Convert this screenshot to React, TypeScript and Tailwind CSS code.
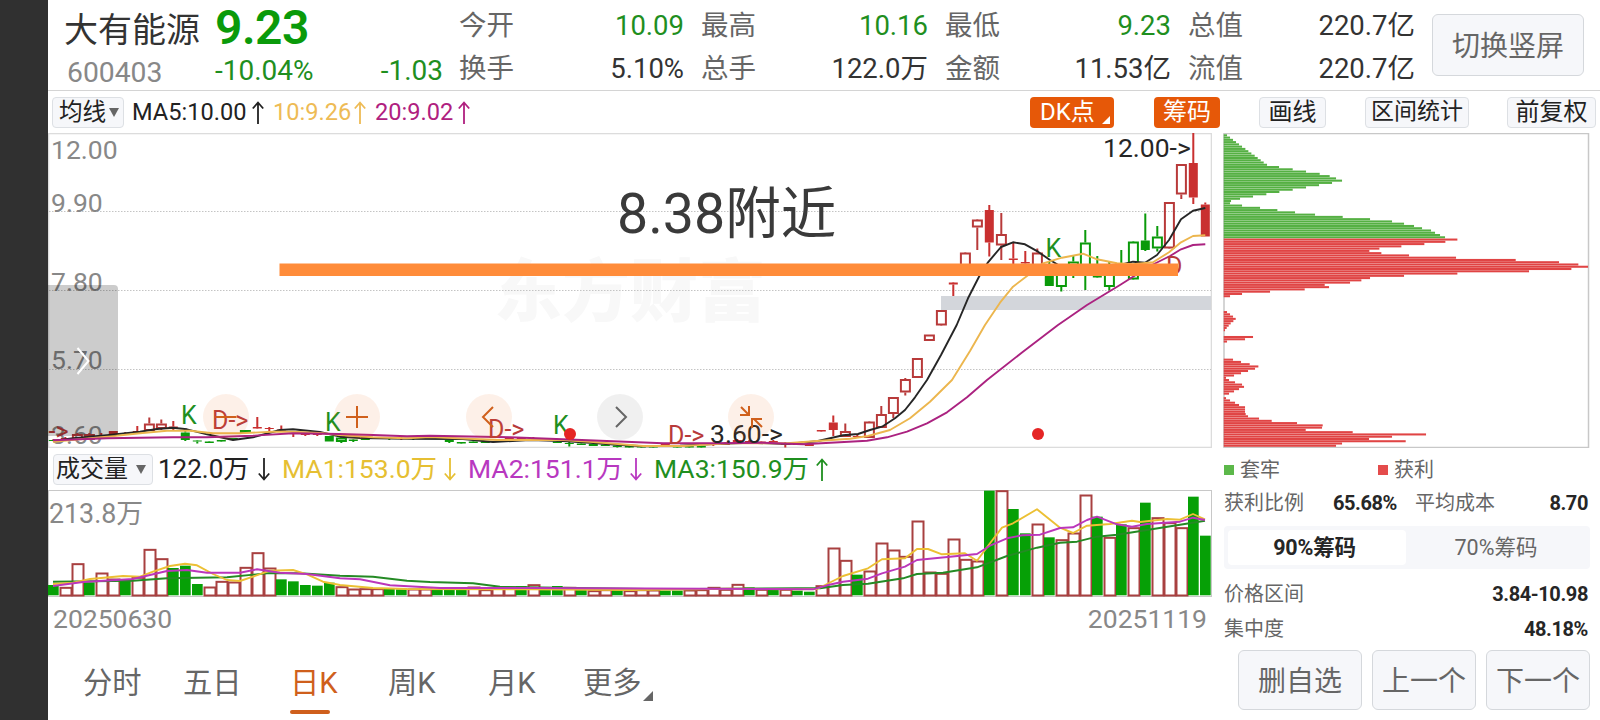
import type { ReactNode } from 'react';

type Point = [number, number];

// [open/close top, bottom, wick top, wick bottom, style]
// style: r = red hollow, R = red solid, g = green hollow, G = green solid
type Candle = [number, number, number, number, string];

const LEFT = 47.7;
const STEP = 12;

const quotes = [
  { label: '今开', value: '10.09', green: true },
  { label: '最高', value: '10.16', green: true },
  { label: '最低', value: '9.23', green: true },
  { label: '总值', value: '220.7亿', green: false },
  { label: '换手', value: '5.10%', green: false },
  { label: '总手', value: '122.0万', green: false },
  { label: '金额', value: '11.53亿', green: false },
  { label: '流值', value: '220.7亿', green: false },
];

const candles: Candle[] = [
  [440, 441, 440, 441, 'G'], [438, 439, 437, 440, 'R'], [434, 440, 433, 440, 'r'], [434, 440, 433, 440, 'r'],
  [436, 437, 433, 438, 'R'], [431, 436, 431, 436, 'R'], [433, 434, 432, 435, 'R'], [431, 433, 426, 434, 'R'],
  [423.5, 431, 417.5, 431, 'r'], [423.5, 429, 419.5, 430, 'r'], [426.5, 428, 421, 430, 'R'], [432.5, 440, 431, 441, 'G'],
  [440.5, 441.5, 440, 443.5, 'G'], [441.5, 443, 441, 443, 'G'], [440, 441.5, 440, 441, 'G'], [438, 439.5, 438, 439, 'G'],
  [430, 432.5, 430, 433, 'g'], [427, 428.5, 417, 429, 'R'], [428, 429, 427, 431, 'R'], [429.5, 430.5, 425.5, 431, 'R'],
  [433, 434, 434, 437, 'R'], [434, 435, 434, 436, 'R'], [434, 435, 434, 436, 'R'], [436, 441.5, 436, 441.5, 'G'],
  [437.5, 442, 437, 443, 'g'], [439.5, 441, 439, 442, 'G'], [436, 440, 436, 440, 'G'], [437, 439, 437, 439, 'G'],
  [438, 439, 438, 440, 'G'], [438, 439, 437, 440, 'R'], [438, 439, 437, 440, 'G'], [438, 439, 438, 439, 'R'],
  [438, 439, 438, 439, 'G'], [440, 442, 440, 443, 'G'], [442, 443.5, 442, 443, 'G'], [441.5, 443, 441, 443, 'G'],
  [441.5, 443, 441, 443, 'G'], [441, 442, 441, 442, 'G'], [438, 440, 438, 440, 'R'], [438, 440, 438, 440, 'R'],
  [438, 439, 437, 440, 'R'], [438, 439, 438, 440, 'R'], [441.5, 443, 441, 443, 'G'], [443, 444, 442, 446.5, 'G'],
  [443.5, 445, 443, 445, 'G'], [444, 446, 444, 446, 'G'], [444.5, 446, 444, 446, 'G'], [445.5, 447, 443, 447.5, 'G'],
  [446, 447.5, 446, 447, 'G'], [446, 447.5, 446, 447, 'G'], [446, 447.5, 446, 447, 'G'], [444, 446, 444, 446, 'R'],
  [446, 447.5, 446, 447, 'G'], [446, 447.5, 446, 447, 'G'], [446, 447.5, 446, 447, 'G'], [444, 445, 443, 446, 'R'],
  [443, 445, 442, 445, 'R'], [440, 443, 439, 444, 'R'], [441, 443, 440, 443, 'R'], [441.5, 443.5, 441, 444, 'R'],
  [441, 443, 440, 443, 'R'], [443.5, 445, 442, 447.5, 'R'], [444, 445, 443, 445, 'R'], [444, 446, 444, 446, 'R'],
  [430, 431.5, 430, 431, 'R'], [422.5, 430, 415.5, 436, 'R'], [431, 437, 423.5, 437, 'r'], [436, 437, 435, 438, 'R'],
  [421.5, 438, 421, 438, 'r'], [414, 428, 406, 428, 'r'], [397, 414, 397, 418, 'r'], [379, 392.5, 378, 395.5, 'r'],
  [358, 378, 358, 378, 'r'], [334.5, 341, 334.5, 341, 'r'], [310, 325.500, 310, 325, 'r'], [282.5, 284.5, 283, 296, 'R'],
  [252.5, 268, 253, 268, 'r'], [219.5, 227.5, 220, 250, 'r'], [210, 242.5, 205, 256.5, 'R'], [234, 245.5, 213, 260, 'r'],
  [258.5, 260, 242.5, 264, 'R'], [262, 263.5, 251, 264, 'R'], [252.5, 268, 248.5, 268, 'r'], [266, 286, 262, 286, 'G'],
  [268, 287, 264, 291.5, 'g'], [261.5, 266, 256, 278, 'g'], [242.5, 272, 230, 290, 'g'], [276, 277.5, 256, 277, 'G'],
  [270, 287, 262, 290.5, 'g'], [266, 270, 250, 272, 'G'], [241.5, 279.5, 242, 279, 'g'], [240.5, 250, 213.5, 251, 'G'],
  [236.5, 248.5, 226, 251.5, 'g'], [202, 248.5, 203, 248, 'r'], [164, 194.5, 165, 199, 'r'], [163, 197.5, 133, 204, 'R'],
  [204.5, 236.5, 202.5, 236.5, 'R'],
];

// top edge of every volume bar, in thirds of a pixel below y=380
const volumes =
  'G615 r622 r551 G607 r579 r597 G602 r592 r508 r536 G564 G557 G612 r621 r604 r606 r562 r518 r564 G598 G604 G615 G617 G608 ' +
  'r620 r627 r626 r626 G627 G628 r627 r627 G627 G628 G628 r621 r629 r625 r621 G618 r614 G625 G618 r622 G628 r632 r629 G628 ' +
  'r632 r629 r630 G632 G632 r630 r629 r622 r628 r613 G622 r628 G624 r628 G632 G635 r617 r504 r541 G584 r573 r489 r510 r529 ' +
  'r423 r576 r580 r477 r538 r543 G332 r332 G387 G460 r432 G472 r479 r459 r345 G410 r472 G433 r443 G368 r413 r428 r443 G350 G467';

const ma5: Point[] = [
  [53, 441], [73, 438.3], [107, 435.3], [140, 431.7], [157, 429], [173, 427.7], [187, 429.3], [207, 434.3],
  [233, 440], [253, 437.3], [280, 430], [293, 429.3], [320, 432], [340, 436.7], [360, 438], [407, 438.7],
  [463, 439], [493, 442], [530, 440], [563, 441], [590, 442.7], [617, 444.7], [643, 446.3], [680, 445.7],
  [713, 444], [750, 442.7], [787, 444], [817, 441.3], [843, 435.3], [858, 434], [870, 430], [882, 426.7],
  [895, 418.3], [905, 410], [915, 397.3], [927, 380], [941, 355], [956.7, 325], [968, 298.3], [979, 276.7],
  [988, 262.3], [1001, 247], [1013, 242.3], [1025, 244.3], [1038, 251.7], [1050, 260], [1060, 266], [1085, 272],
  [1110, 268], [1120, 265], [1133, 261.7], [1145, 262.7], [1157, 255], [1169, 240], [1181, 219.3], [1193, 210.7],
  [1205.3, 208],
];

const ma10: Point[] = [
  [53, 441.7], [107, 436.7], [140, 433.3], [167, 430.7], [190, 430.7], [213, 433.3], [240, 433.3], [273, 431.7],
  [293, 431.7], [323, 433.3], [340, 435], [373, 437.3], [407, 438.3], [430, 437], [497, 440], [563, 440],
  [590, 441.7], [643, 446], [683, 446], [730, 443.3], [787, 443.3], [817, 441], [850, 438.7], [868, 436],
  [890, 430], [910, 418.3], [930, 401.7], [952, 380], [970, 351], [985, 325], [1000, 302.7], [1013, 286.7],
  [1027, 276], [1043, 263.3], [1062, 257.7], [1083, 253.7], [1097, 259.3], [1117, 263.3], [1133, 264.3],
  [1153, 262.3], [1169, 252.3], [1181, 242.3], [1193, 236], [1205.3, 235.3],
];

const ma20: Point[] = [
  [53, 440.3], [107, 438.3], [173, 437.3], [207, 437.3], [253, 435.7], [293, 433.3], [340, 434], [373, 435],
  [407, 436.3], [430, 435.7], [510, 437.3], [563, 439.3], [663, 443.3], [713, 443.3], [763, 442.7], [803, 444.3],
  [867, 440.7], [887, 437.3], [907, 431.7], [927, 423.3], [947, 412.3], [967, 397.3], [987, 380], [1022, 352.5],
  [1058, 325], [1070, 316.7], [1087, 305], [1120, 285], [1150, 266], [1170, 256], [1181, 249.3], [1193, 245],
  [1205.3, 244.3],
];

const vol5: Point[] = [
  [53, 584], [73, 582.7], [90, 579], [123, 576], [140, 576.7], [153, 571.7], [170, 566], [185, 563.7],
  [197, 565.3], [213, 574], [227, 580], [240, 581], [253, 576.7], [270, 570.7], [293, 570], [307, 574.3],
  [323, 581.7], [340, 585], [373, 588], [407, 589], [530, 589.3], [630, 590], [730, 588.7], [797, 589.3],
  [817, 589], [827, 584], [843, 576], [868, 568.3], [882, 559.3], [905, 558.3], [917, 549], [928, 549],
  [942, 554.3], [965, 553.3], [977, 560.7], [990, 543.3], [1002, 527.7], [1013, 523.3], [1037, 509.3],
  [1060, 527.7], [1073, 533], [1087, 525.7], [1110, 524], [1132, 520.7], [1140, 522], [1167, 519], [1180, 519.7],
  [1193, 514], [1205, 519.3],
];

const vol10: Point[] = [
  [53, 586], [83, 582], [133, 579], [167, 571], [187, 570], [207, 572.7], [240, 572.7], [257, 569.3],
  [280, 572.7], [307, 574], [340, 578.3], [360, 579.3], [390, 585.3], [440, 588], [530, 588], [813, 589.3],
  [827, 585.3], [843, 581.7], [868, 578.7], [882, 573.3], [905, 566.7], [917, 560], [950, 556.7], [977, 554],
  [990, 545.7], [1007, 538.3], [1022, 535.3], [1040, 534.7], [1060, 528], [1073, 527.3], [1087, 520],
  [1097, 516.7], [1117, 524.3], [1132, 526.7], [1147, 524], [1180, 521.7], [1193, 517.7], [1205, 520],
];

const vol20: Point[] = [
  [53, 581.7], [133, 580.7], [167, 578.3], [227, 577.3], [267, 573.3], [300, 573.3], [340, 575.7], [373, 576.7],
  [407, 580.7], [430, 582], [473, 583.3], [500, 586.7], [663, 589.3], [730, 588.7], [797, 588.3], [820, 588.3],
  [843, 585], [868, 583.7], [903, 578.3], [917, 574], [943, 572.7], [977, 567.3], [1007, 556], [1037, 547.7],
  [1060, 542.7], [1077, 541.7], [1097, 536.7], [1117, 534.7], [1147, 530], [1180, 524.7], [1205, 520.7],
];

// right end of each chip row, in thirds of a pixel; 0 is an empty row
const chips = [
  51, 60, 69, 78, 87, 96, 106, 115, 124, 134, 143, 152, 161, 171, 207, 248, 288, 329, 359, 378, 396, 366, 327, 288,
  248, 208, 169, 129, 90, 63, 60, 96, 150, 202, 255, 315, 398, 480, 546, 582, 612, 636, 663, 675, 690, 705, 742, 706,
  643, 574, 508, 478, 514, 597, 738, 917, 1047, 1105, 1134, 1084, 957, 742, 582, 480, 454, 420, 344, 357, 284, 180,
  96, 60, 0, 0, 0, 0, 0, 0, 51, 60, 69, 77, 70, 62, 56, 50, 45, 0, 0, 129, 105, 51, 0, 0, 0, 0, 0, 0, 0, 69, 93, 119,
  145, 135, 114, 93, 72, 48, 57, 75, 96, 102, 87, 72, 57, 0, 48, 60, 75, 87, 105, 105, 105, 107, 114, 147, 185, 261,
  338, 336, 287, 428, 648, 546, 477, 587, 396, 378,
];

const toPath = (points: Point[]) => {
  let d = `M${points[0][0]} ${points[0][1]}`;
  for (let i = 1; i < points.length; i++) {
    const [x, y] = points[i];
    d += ` L${x} ${y}`;
  }
  return d;
};

const Line = ({ points, color }: { points: Point[]; color: string }) => (
  <path d={toPath(points)} fill="none" stroke={color} strokeWidth="1.9" strokeLinejoin="round" />
);

const Arrow = ({ down = false }: { down?: boolean }) => (
  <svg
    viewBox="0 0 12 23"
    className={down ? 'h-[23px] w-3 rotate-180' : 'h-[23px] w-3'}
    fill="none"
    stroke="currentColor"
    strokeWidth="1.8"
  >
    <path d="M6 23V1.5M.8 7.5 6 1.5l5.2 6" />
  </svg>
);

const Caret = () => (
  <svg viewBox="0 0 10 9" className="h-[9px] w-[10px]" fill="#666">
    <path d="M0 0h10L5 9z" />
  </svg>
);

const Corner = ({ className }: { className: string }) => (
  <svg viewBox="0 0 10 10" className={className} fill="currentColor">
    <path d="M10 0v10H0z" />
  </svg>
);

const RoundButton = ({ children, className }: { children: ReactNode; className: string }) => (
  <button className={`absolute top-[261px] flex size-[46px] items-center justify-center rounded-full ${className}`}>
    <svg viewBox="0 0 46 46" className="size-[46px]" fill="none" stroke="currentColor" strokeWidth="2">
      {children}
    </svg>
  </button>
);

const Header = () => (
  <header className="flex h-[91px] border-b border-[#d4d4d4]">
    <div className="w-[406px] pl-4">
      <div className="flex h-[52px]">
        <span className="w-[151px] text-[34px] leading-[60px] text-[#333]">大有能源</span>
        <span className="text-[48px] leading-[55px] font-semibold tracking-[-0.5px] text-[#0a9a0a]">9.23</span>
      </div>
      <div className="flex pl-[3px] text-[28px] leading-[38px] text-[#1f8f1f]">
        <span className="w-[148px] pt-[2px] text-[28.3px] text-[#888]">600403</span>
        <span>-10.04%</span>
        <span className="ml-auto pr-[11px]">-1.03</span>
      </div>
    </div>
    <div className="grid grid-cols-[225px_227px_226px_227px] gap-x-[17px] pt-[5px] pl-[5px] text-[27.5px] leading-[42px]">
      {quotes.map((q, i) => (
        <div key={i} className="flex h-[42px] justify-between whitespace-nowrap">
          <span className="text-[#666]">{q.label}</span>
          <span className={q.green ? 'text-[#1f8f1f]' : 'text-[#333]'}>{q.value}</span>
        </div>
      ))}
    </div>
    <button className="mt-[14px] ml-[17px] h-[62px] w-[152px] rounded-md border border-[#d5d8dc] bg-[#f6f7fa] pt-[3px] text-[28px] text-[#666]">
      切换竖屏
    </button>
  </header>
);

const Toolbar = () => (
  <div className="flex h-[42px] items-center pt-0 pl-1 text-[23.6px] leading-[28px] whitespace-nowrap text-[#222]">
    <button className="flex h-[31px] w-[72px] items-center gap-[3px] rounded border border-[#dde0e4] bg-[#f6f7fa] pl-[6px]">
      均线
      <Caret />
    </button>
    <span className="ml-2 w-[120px]">MA5:10.00</span>
    <Arrow />
    <span className="ml-[9px] flex w-[102px] items-center text-[#eebb55]">
      <span className="w-[81px]">10:9.26</span>
      <Arrow />
    </span>
    <span className="flex items-center text-[#b0207f]">
      <span className="w-[83px]">20:9.02</span>
      <Arrow />
    </span>
    <div className="ml-auto flex pr-[4px] text-[24px]">
      <button className="relative h-[31px] w-[84px] rounded bg-[#e65808] pl-[10px] text-left text-white">
        DK点
        <Corner className="absolute right-[4px] bottom-[4px] size-[8px]" />
      </button>
      <button className="ml-[40px] h-[31px] w-[66px] rounded bg-[#e65808] text-white">筹码</button>
      <button className="ml-[39px] h-[31px] w-[67px] rounded border border-[#dde0e4] bg-[#f6f7fa]">画线</button>
      <button className="ml-[39px] h-[31px] w-[104px] rounded border border-[#dde0e4] bg-[#f6f7fa] text-[23px]">
        区间统计
      </button>
      <button className="ml-[38px] h-[31px] w-[89px] rounded border border-[#dde0e4] bg-[#f6f7fa]">前复权</button>
    </div>
  </div>
);

const PriceChart = () => (
  <div className="relative h-[315px] w-[1164px]">
    <svg viewBox="48 133 1164 315" className="h-[315px] w-[1164px]">
      <rect x="48.5" y="133.5" width="1163" height="314" fill="none" stroke="#dcdcdc" strokeWidth="1.6" />
      <text x="494" y="316" fontSize="68" fontWeight="900" fill="#f8f8f8">
        东方财富
      </text>
      {[211.5, 290.5, 369.5].map((y) => (
        <path key={y} d={`M49 ${y}H1211`} stroke="#c4c4c4" strokeDasharray="1.5 1.5" />
      ))}
      <rect x="941" y="296" width="270" height="14" fill="#d3d6db" />
      <g fontSize="26.5" fill="#888">
        <text x="51" y="159">12.00</text>
        <text x="51" y="212">9.90</text>
        <text x="51" y="291">7.80</text>
        <text x="51" y="369">5.70</text>
        <text x="51" y="444">3.60</text>
      </g>
      {candles.map(([top, bottom, high, low, style], i) => {
        const x = LEFT + 5.6 + STEP * i;
        const hollow = style === 'r' || style === 'g';
        const color = style === 'g' || style === 'G' ? '#0a9a0a' : hollow ? '#b83a3a' : '#c93030';
        return (
          <g key={i} stroke={color} strokeWidth="2">
            <path d={`M${x} ${high}V${top}M${x} ${bottom}V${low}`} />
            {hollow ? (
              <rect x={x - 4.4} y={top + 1} width="9" height={Math.max(bottom - top - 2, 1)} fill="none" />
            ) : (
              <rect x={x - 4.5} y={top} width="9" height={bottom - top} fill={color} stroke="none" />
            )}
          </g>
        );
      })}
      <Line points={ma5} color="#262626" />
      <Line points={ma10} color="#ecb64e" />
      <Line points={ma20} color="#ab2280" />
      <g fontSize="25" fill="#1f8f1f">
        <text x="181" y="424">K</text>
        <text x="325" y="431">K</text>
        <text x="553" y="434">K</text>
        <text x="1045.500" y="257">K</text>
      </g>
      <g fontSize="25" fill="#b83a3a">
        <text x="48.500" y="440">-&gt;</text>
        <text x="212" y="429">D-&gt;</text>
        <text x="488" y="438">D-&gt;</text>
        <text x="668" y="444">D-&gt;</text>
        <text x="1166" y="275">D</text>
      </g>
      <g fontSize="26.5" fill="#262626">
        <text x="710" y="443">3.60-&gt;</text>
        <text x="1103" y="157">12.00-&gt;</text>
      </g>
      <circle cx="570" cy="434" r="6" fill="#e52525" />
      <circle cx="1038" cy="434" r="6" fill="#e52525" />
      <rect x="279.5" y="263.5" width="898.5" height="12.5" fill="#ff8c3a" />
      <text x="617" y="233" fontSize="55.5" fill="#3a3a3a">
        8.38附近
      </text>
    </svg>
    <div className="absolute top-[152px] left-0 flex h-[151px] w-[70px] items-center rounded-r bg-black/20 pl-[28px]">
      <svg viewBox="0 0 14 28" className="h-7 w-3.5" fill="none" stroke="#fff" strokeWidth="2">
        <path d="M1.5 1 12.5 14 1.5 27" />
      </svg>
    </div>
    <RoundButton className="left-[155px] bg-[#f06a20]/10 text-[#d0601c]">
      <path d="M12.5 23h21" />
    </RoundButton>
    <RoundButton className="left-[286px] bg-[#f06a20]/10 text-[#d0601c]">
      <path d="M12 23h22M23 12v22" />
    </RoundButton>
    <RoundButton className="left-[418px] bg-[#f06a20]/10 text-[#d0601c]">
      <path d="M27 13 17 23l10 10" />
    </RoundButton>
    <RoundButton className="left-[549px] bg-black/6 text-[#666]">
      <path d="M19 13l10 10-10 10" />
    </RoundButton>
    <RoundButton className="left-[680px] bg-[#f06a20]/10 text-[#d0601c]">
      <path d="M13 13l8 8M12 21h9v-9M34 33l-8-8M24 34v-9h10" />
    </RoundButton>
  </div>
);

const VolumeLegend = () => (
  <div className="flex h-[42px] items-center pl-[5px] text-[26.5px] leading-[30px] whitespace-nowrap text-[#222]">
    <button className="flex h-[31px] w-[100px] items-center justify-between rounded border border-[#dde0e4] bg-[#f6f7fa] pr-[6px] pl-[2px] text-[24px] leading-[28px]">
      成交量
      <Caret />
    </button>
    <span className="ml-[5px] w-[100px] text-[26px]">122.0万</span>
    <Arrow down />
    <span className="ml-[12px] flex w-[186px] items-center text-[#e6bf33]">
      <span className="w-[162px]">MA1:153.0万</span>
      <Arrow down />
    </span>
    <span className="flex w-[186px] items-center text-[#b838c0]">
      <span className="w-[162px]">MA2:151.1万</span>
      <Arrow down />
    </span>
    <span className="flex items-center text-[#1f8f1f]">
      <span className="w-[162px]">MA3:150.9万</span>
      <Arrow />
    </span>
  </div>
);

const VolumeChart = () => (
  <svg viewBox="48 490 1164 107" className="h-[107px] w-[1164px]">
    <rect x="48.5" y="490.5" width="1163" height="106" fill="none" stroke="#c8c8c8" />
    <text x="49" y="522.5" fontSize="26.8" fill="#888">
      213.8万
    </text>
    {volumes.split(' ').map((v, i) => {
      const x = LEFT + STEP * i;
      const top = 380 + Number(v.slice(1)) / 3;
      return v[0] === 'G' ? (
        <rect key={i} x={x + 0.3} y={top} width="10.7" height={595.3 - top} fill="#06a006" />
      ) : (
        <rect key={i} x={x + 0.8} y={top + 0.5} width="11" height={595 - top} fill="#fff" stroke="#a84040" strokeWidth="2" />
      );
    })}
    <Line points={vol20} color="#248a24" />
    <Line points={vol5} color="#ecc034" />
    <Line points={vol10} color="#bb36bb" />
  </svg>
);

const tabs = [
  { name: '分时', className: 'w-[100px]' },
  { name: '五日', className: 'w-[107px]' },
  { name: '日K', className: 'w-[98px] text-[#cf5f1c]' },
  { name: '周K', className: 'w-[100px]' },
  { name: '月K', className: 'w-[95px]' },
  { name: '更多', className: 'w-[60px]' },
];

const Tabs = () => (
  <nav className="flex h-20 pt-[19px] pl-[35px] text-[29.3px] leading-[49px] text-[#666]">
    {tabs.map((tab) => (
      <div key={tab.name} className={`flex flex-col ${tab.className}`}>
        <span className="h-[51px]">{tab.name}</span>
        {tab.name === '日K' && <div className="h-[4px] w-10 rounded-full bg-[#cf5f1c]" />}
      </div>
    ))}
    <Corner className="mt-[32px] size-[10px]" />
  </nav>
);

const ChipPanel = () => (
  <aside className="ml-[11px] w-[367px]">
    <svg viewBox="1223 133 367 315" className="h-[315px] w-[367px]">
      <rect x="1224" y="133.5" width="364.5" height="314" fill="none" stroke="#c8c8c8" strokeWidth="1.5" />
      {chips.map((end, i) =>
        end ? (
          <rect
            key={i}
            x="1223.7"
            y={134.3 + i * 2.266}
            width={(end - 41) / 3}
            height="2.05"
            fill={i < 46 ? '#55b043' : '#e04444'}
          />
        ) : null,
      )}
    </svg>
    <div className="flex h-[42px] items-center pt-px pl-px text-[20px] text-[#666]">
      <i className="mr-[6px] size-[10px] bg-[#5cb84a]" />
      <span className="w-[138px]">套牢</span>
      <i className="mr-[6px] size-[10px] bg-[#e44c4c]" />
      <span>获利</span>
    </div>
    <div className="flex h-6 items-center pt-px pr-[2px] pl-px text-[20px] text-[#666]">
      <span className="w-[80px]">获利比例</span>
      <b className="w-[93px] text-right font-bold tracking-[-0.4px] text-[#262626]">65.68%</b>
      <span className="ml-[18px]">平均成本</span>
      <b className="ml-auto font-bold tracking-[-0.4px] text-[#262626]">8.70</b>
    </div>
    <div className="mt-3 ml-px flex h-[43px] rounded bg-[#f6f7fa] p-1 text-[21.5px] text-[#666]">
      <button className="w-[178px] rounded bg-white pt-px pr-[5px] font-bold tracking-[-0.2px] text-[#262626]">
        90%筹码
      </button>
      <button className="flex-1 pt-px">70%筹码</button>
    </div>
    <div className="mt-[7px] flex h-[35px] items-center justify-between pr-[2px] pl-px text-[20px] text-[#666]">
      价格区间
      <b className="font-bold tracking-[-0.4px] text-[#262626]">3.84-10.98</b>
    </div>
    <div className="flex h-[35px] items-center justify-between pr-[2px] pl-px text-[20px] text-[#666]">
      集中度
      <b className="font-bold tracking-[-0.4px] text-[#262626]">48.18%</b>
    </div>
    <div className="mt-1 flex gap-[10px] pl-[15px] text-[28px] text-[#666]">
      <button className="h-[60px] w-[124px] rounded-md border border-[#d5d8dc] bg-[#f6f7fa] pt-1">删自选</button>
      <button className="h-[60px] w-[104px] rounded-md border border-[#d5d8dc] bg-[#f6f7fa] pt-1">上一个</button>
      <button className="h-[60px] w-[104px] rounded-md border border-[#d5d8dc] bg-[#f6f7fa] pt-1">下一个</button>
    </div>
  </aside>
);

const App = () => {
  return (
    <div className="flex h-[720px] w-[1600px] overflow-hidden bg-white font-['Roboto','Noto_Sans_CJK_SC',sans-serif]">
      <div className="w-12 bg-[#303030]" />
      <div className="flex w-[1552px] flex-col">
        <Header />
        <Toolbar />
        <div className="flex">
          <main className="w-[1164px]">
            <PriceChart />
            <VolumeLegend />
            <VolumeChart />
            <div className="flex h-[43px] justify-between pr-[5px] pl-[5px] text-[26.5px] leading-[43px] text-[#888]">
              <span>20250630</span>
              <span>20251119</span>
            </div>
            <Tabs />
          </main>
          <ChipPanel />
        </div>
      </div>
    </div>
  );
};

export default App;
